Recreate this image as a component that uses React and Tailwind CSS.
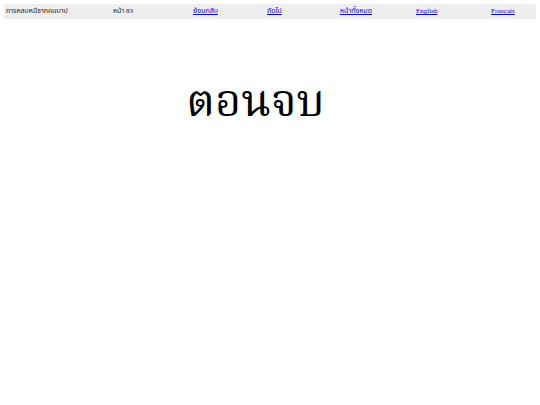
export default function App() {
  const link = "underline text-[#0000ee]";
  return (
    <div className="bg-white w-[540px] h-[405px]" style={{ fontFamily: '"Liberation Serif", "Noto Serif Thai", serif' }}>
      <div className="pt-[4px] px-[4px]">
        <div className="bg-[#eeeeee] h-[15px] flex items-center text-[7px] text-[#222222]" style={{ fontFamily: '"Liberation Serif", "Noto Sans Thai", serif' }}>
          <div className="w-[107px] pl-[2px]">การหลบหนีจากคนบาป</div>
          <div className="w-[80px] pl-[2px]">หน้า 83</div>
          <div className="w-[74px] pl-[2px]"><a href="#" className={link}>ย้อนกลับ</a></div>
          <div className="w-[74px] pl-[2px]"><a href="#" className={link}>ถัดไป</a></div>
          <div className="w-[75px] pl-[1px]"><a href="#" className={link}>หน้าทั้งหมด</a></div>
          <div className="w-[75px] pl-[2px]"><a href="#" className={link}>English</a></div>
          <div className="flex-1 pl-[2px]"><a href="#" className={link}>Français</a></div>
        </div>
      </div>
      <div className="flex justify-center pt-[60px] pr-[29px]">
        <h1 className="text-[45px] leading-none text-black">ตอนจบ</h1>
      </div>
    </div>
  );
}
